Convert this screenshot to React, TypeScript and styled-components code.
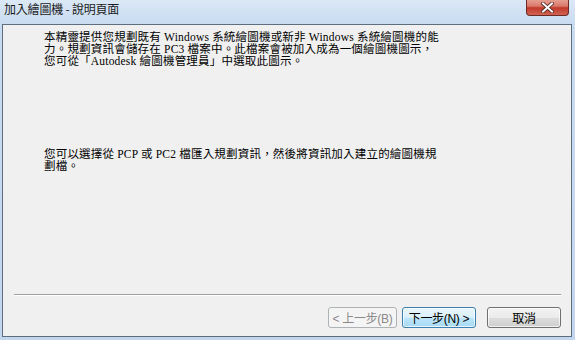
import styled, {createGlobalStyle} from 'styled-components';

const GlobalStyle = createGlobalStyle`
  html, body {
    margin: 0;
    padding: 0;
    background: #c6dbf0;
  }
`;

const Window = styled.div`
  width: 575px;
  height: 340px;
  box-sizing: border-box;
  background: linear-gradient(to bottom, #dbe8f6 0px, #c8dcf1 24px, #c2d7ee 100%);
  display: flex;
  flex-direction: column;
  overflow: hidden;
`;

const TitleBar = styled.div`
  height: 24px;
  display: flex;
  align-items: flex-start;
  justify-content: space-between;
  padding: 0 6px 0 4px;
  box-sizing: border-box;
`;

const Title = styled.div`
  font-family: 'Noto Sans CJK TC', 'Noto Sans', sans-serif;
  font-size: 12px;
  line-height: 18px;
  color: #1b1b1b;
  letter-spacing: -0.2px;
`;

const CloseButton = styled.div`
  width: 43px;
  height: 17px;
  margin-top: -1px;
  box-sizing: border-box;
  border: 1px solid #6e2a26;
  border-top: none;
  border-radius: 0 0 4px 4px;
  background: linear-gradient(to bottom, #e7a597 0%, #d9786a 45%, #c2392a 55%, #d06453 100%);
  display: flex;
  align-items: center;
  justify-content: center;
`;

const Client = styled.div`
  flex: 1;
  margin: 0 3px 3px 2px;
  border: 1px solid #5f6e7e;
  background: #f0f0f0;
  display: flex;
  flex-direction: column;
`;

const Content = styled.div`
  height: 269px;
  box-sizing: border-box;
  padding: 6px 0 0 41px;
  font-family: 'Liberation Serif', 'Noto Sans CJK TC', serif;
  font-size: 11.5px;
  letter-spacing: 0.2px;
  line-height: 12px;
  color: #000;
`;

const Paragraph = styled.div<{gap?: number}>`
  margin-top: ${p => p.gap ?? 0}px;
`;

const Line = styled.div`
  white-space: nowrap;
  height: 12px;
`;

const Separator = styled.div`
  margin: 0 10px 0 11px;
  height: 1px;
  background: #a0a0a0;
  border-bottom: 1px solid #ffffff;
`;

const ButtonRow = styled.div`
  margin-top: 11px;
  padding-right: 10px;
  display: flex;
  justify-content: flex-end;
  align-items: center;
`;

const Button = styled.div<{variant?: 'disabled' | 'default'; width: number; gap?: number}>`
  width: ${p => p.width}px;
  height: 21px;
  margin-left: ${p => p.gap ?? 0}px;
  box-sizing: border-box;
  border-radius: 3px;
  display: flex;
  align-items: center;
  justify-content: center;
  font-family: 'Liberation Sans', 'Noto Sans CJK TC', sans-serif;
  font-size: 12px;
  letter-spacing: -0.3px;
  border: 1px solid
    ${p => (p.variant === 'disabled' ? '#adb2b5' : p.variant === 'default' ? '#3c7fb1' : '#707070')};
  color: ${p => (p.variant === 'disabled' ? '#8a8a8a' : '#000')};
  background: ${p =>
    p.variant === 'disabled'
      ? '#f4f4f4'
      : p.variant === 'default'
        ? 'linear-gradient(to bottom, #eaf6fd 0%, #d9f0fc 50%, #bee6fd 50%, #a7d9f5 100%)'
        : 'linear-gradient(to bottom, #f2f2f2 0%, #ebebeb 50%, #dddddd 50%, #cfcfcf 100%)'};
  box-shadow: ${p => (p.variant === 'disabled' ? 'none' : 'inset 0 0 0 1px rgba(255,255,255,0.7)')};
`;

export default function App() {
  return (
    <>
      <GlobalStyle />
      <Window>
        <TitleBar>
          <Title>加入繪圖機 - 說明頁面</Title>
          <CloseButton>
            <svg width="13" height="11" viewBox="0 0 13 11">
              <path
                d="M2 1.5 L11 9.5 M11 1.5 L2 9.5"
                stroke="#4a2420"
                strokeWidth="3.6"
                strokeLinecap="square"
              />
              <path
                d="M2 1.5 L11 9.5 M11 1.5 L2 9.5"
                stroke="#ffffff"
                strokeWidth="2"
                strokeLinecap="square"
              />
            </svg>
          </CloseButton>
        </TitleBar>
        <Client>
          <Content>
            <Paragraph>
              <Line>本精靈提供您規劃既有 Windows 系統繪圖機或新非 Windows 系統繪圖機的能</Line>
              <Line>力。規劃資訊會儲存在 PC3 檔案中。此檔案會被加入成為一個繪圖機圖示，</Line>
              <Line>您可從「Autodesk 繪圖機管理員」中選取此圖示。</Line>
            </Paragraph>
            <Paragraph gap={81}>
              <Line>您可以選擇從 PCP 或 PC2 檔匯入規劃資訊，然後將資訊加入建立的繪圖機規</Line>
              <Line>劃檔。</Line>
            </Paragraph>
          </Content>
          <Separator />
          <ButtonRow>
            <Button variant="disabled" width={69}>&lt; 上一步(B)</Button>
            <Button variant="default" width={74} gap={5}>下一步(N) &gt;</Button>
            <Button width={74} gap={11}>取消</Button>
          </ButtonRow>
        </Client>
      </Window>
    </>
  );
}
